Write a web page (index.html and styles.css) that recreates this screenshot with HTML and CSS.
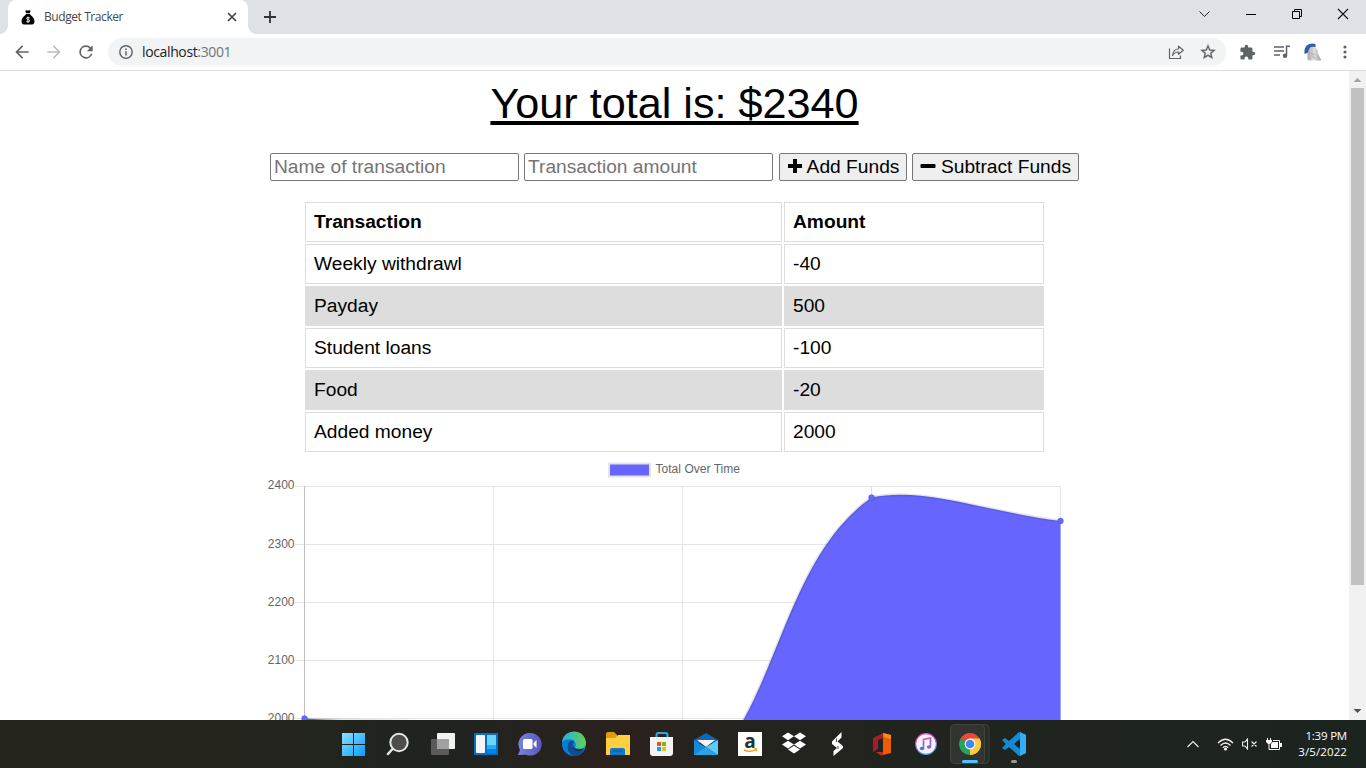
FILE: index.html
```html
<!DOCTYPE html>
<html lang="en">
<head>
<meta charset="utf-8">
<title>Budget Tracker</title>
<link rel="stylesheet" href="styles.css">
</head>
<body>
<div class="screen">
  <header class="tabstrip">
    <div class="tab">
      <svg class="favicon" width="14" height="15" viewBox="0 0 14 15"><path d="M4.300 1.200Q4.300.3 5.200.6L6 .3 7 .7 8.200.3Q9.800.2 9.500 1.200L8.800 3H5.200ZM5.200 3.700h3.600c.3 1.600 4.700 3.400 4.700 7.600 0 2-1 3.300-2.500 3.300H3C1.500 14.600.5 13.300.5 11.300.5 7.100 4.900 5.300 5.200 3.700Z" fill="#000"/><path d="M8.800 8.100C8 7.200 5.400 7.300 5.500 8.600 5.600 9.900 8.700 9.200 8.700 10.800 8.700 12.200 6 12.200 5.200 11.200M7 6.600v6.200" fill="none" stroke="#fff" stroke-width=".9"/></svg>
      <span class="tab-title">Budget Tracker</span>
      <svg class="tab-close" width="10" height="10" viewBox="0 0 10 10"><path d="M1 1l8 8M9 1L1 9" stroke="#3c4043" stroke-width="1.600"/></svg>
      <i class="curve left"></i><i class="curve right"></i>
    </div>
    <svg class="newtab" width="14" height="14" viewBox="0 0 14 14"><path d="M7 1v12M1 7h12" stroke="#303236" stroke-width="1.800"/></svg>
    <div class="winctl">
      <svg viewBox="0 0 46 28"><path d="M17.500 11.500l5 5 5-5" fill="none" stroke="#222" stroke-width="1"/></svg>
      <svg viewBox="0 0 46 28"><path d="M18 14.500h10" stroke="#000"/></svg>
      <svg viewBox="0 0 46 28"><path d="M18.500 11.500h7v7h-7zM20.500 11.500v-2h7v7h-2" fill="none" stroke="#000"/></svg>
      <svg viewBox="0 0 46 28"><path d="M18 9l10 10M28 9L18 19" stroke="#111" stroke-width="1.100"/></svg>
    </div>
  </header>
  <nav class="toolbar">
    <svg class="nav" viewBox="0 0 24 24"><path d="M20 11H7.800l5.600-5.600L12 4l-8 8 8 8 1.400-1.400L7.800 13H20z" fill="#5f6368"/></svg>
    <svg class="nav" viewBox="0 0 24 24"><path d="M12 4l-1.400 1.400 5.600 5.600H4v2h12.200l-5.600 5.600L12 20l8-8z" fill="#bbbdbf"/></svg>
    <svg class="nav" viewBox="0 0 24 24"><path d="M17.650 6.350A8 8 0 1 0 19.730 14h-2.080A6 6 0 1 1 12 6c1.660 0 3.140.69 4.220 1.780L13 11h7V4z" fill="#5f6368"/></svg>
    <div class="omnibox">
      <svg width="14" height="14" viewBox="0 0 14 14"><circle cx="7" cy="7" r="6.200" fill="none" stroke="#5f6368" stroke-width="1.400"/><path d="M7 6.200v4.300M7 3.400v1.500" stroke="#5f6368" stroke-width="1.500"/></svg>
      <span class="url">localhost<span>:3001</span></span>
      <svg class="share" width="16" height="16" viewBox="0 0 16 16" fill="none" stroke="#5f6368" stroke-width="1.200"><path d="M1.500 4.500v10h11v-3"/><path d="M4.500 11.500c.5-4.500 2.500-6.500 6-6.500V2.200L15.300 6.300l-4.800 4V8C8 8 6 9 4.500 11.500z" stroke-linejoin="round"/></svg>
      <svg width="18" height="18" viewBox="0 0 24 24"><path d="M22 9.240l-7.190-.62L12 2 9.190 8.630 2 9.240l5.460 4.730L5.820 21 12 17.270 18.180 21l-1.630-7.030zM12 15.400l-3.760 2.270 1-4.280-3.320-2.880 4.380-.38L12 6.100l1.710 4.040 4.380.38-3.320 2.880 1 4.280z" fill="#5f6368" stroke="#5f6368" stroke-width=".4"/></svg>
    </div>
    <div class="extras">
      <svg width="17" height="17" viewBox="0 0 24 24"><path d="M20.500 11H19V7a2 2 0 0 0-2-2h-4V3.500a2.500 2.500 0 0 0-5 0V5H4a2 2 0 0 0-2 2v3.800h1.500a2.700 2.700 0 0 1 0 5.400H2V20a2 2 0 0 0 2 2h3.800v-1.500a2.700 2.700 0 0 1 5.400 0V22H17a2 2 0 0 0 2-2v-4h1.500a2.500 2.500 0 0 0 0-5z" fill="#5f6368"/></svg>
      <svg width="16" height="14" viewBox="0 0 16 14"><path d="M0 2h10M0 6h10M0 10h6M12.500 1.200H16M12.500.5v10" stroke="#5f6368" stroke-width="1.500" fill="none"/><circle cx="11" cy="10.700" r="2.200" fill="#5f6368"/></svg>
      <svg class="avatar" width="18" height="19" viewBox="0 0 18 19"><defs><linearGradient id="helm"><stop stop-color="#a8a8a8"/><stop offset=".5" stop-color="#dedede"/><stop offset="1" stop-color="#a0a0a0"/></linearGradient></defs><path d="M3.500 8Q5 3.500 11 3.500 13.500 6 14 10.500L17.300 17.300Q12 18.500 8 16.500L6.500 18 3.500 16.500Z" fill="url(#helm)"/><path d="M8.500 13l3 2.500M7 10.500l4 1" stroke="#999" stroke-width=".7"/><path d="M.3 10Q.2 .6 8 .5L11.500 1V4L8 3.800Q4.500 5 4 9.500L1 11Z" fill="#2f5da8"/></svg>
      <svg width="4" height="14" viewBox="0 0 4 14" fill="#5f6368"><circle cx="2" cy="2" r="1.600"/><circle cx="2" cy="7" r="1.600"/><circle cx="2" cy="12" r="1.600"/></svg>
    </div>
  </nav>
  <div class="viewport">
    <main class="page">
      <h1 class="total">Your total is: $2340</h1>
      <form class="entry">
        <input type="text" placeholder="Name of transaction">
        <input type="text" placeholder="Transaction amount">
        <button type="button" class="add"><svg width="16" height="16" viewBox="0 0 16 16"><path d="M8 1v14M1 8h14" stroke="#000" stroke-width="4"/></svg>Add Funds</button>
        <button type="button" class="sub"><svg width="16" height="16" viewBox="0 0 16 16"><rect x=".5" y="6" width="15" height="4" rx="1"/></svg>Subtract Funds</button>
      </form>
      <table class="ledger">
        <thead><tr><th>Transaction</th><th>Amount</th></tr></thead>
        <tbody>
          <tr><td>Weekly withdrawl</td><td>-40</td></tr>
          <tr><td>Payday</td><td>500</td></tr>
          <tr><td>Student loans</td><td>-100</td></tr>
          <tr><td>Food</td><td>-20</td></tr>
          <tr><td>Added money</td><td>2000</td></tr>
        </tbody>
      </table>
      <svg class="chart" width="829" height="268" viewBox="260 452 829 268">
        <rect x="609" y="463.500" width="41" height="13" fill="#66f"/><rect x="609" y="463.500" width="41" height="13" fill="none" stroke="#e5e5e5" stroke-width="2"/>
        <text x="655.500" y="473" textLength="84.500">Total Over Time</text>
        <g stroke="#e5e5e5"><path d="M295 486.500h766M295 544.500h766M295 602.500h766M295 660.500h766M295 718.500h766M493.500 486v240M682.500 486v240M871.500 486v240M1060.500 486v240"/><path d="M304.500 486v240" stroke="#bfbfbf"/></g>
        <path d="M304.500 718.500C380.100 723.100 419.600 716.300 493.500 730S627.600 822.300 682.500 788.500C778.800 729.300 773.900 566.600 871.500 497.500C925.100 486.500 984.900 511.600 1060.500 521V900H304.500Z" fill="#66f"/>
        <path d="M304.500 718.500C380.100 723.100 419.600 716.300 493.500 730S627.600 822.300 682.500 788.500C778.800 729.300 773.900 566.600 871.500 497.500C925.100 486.500 984.900 511.600 1060.500 521" fill="none" stroke="#000" stroke-opacity=".1" stroke-width="3"/>
        <g fill="#66f" stroke="#000" stroke-opacity=".1"><circle cx="304.500" cy="718.500" r="3"/><circle cx="871.500" cy="497.500" r="3"/><circle cx="1060.500" cy="521" r="3"/></g>
        <g text-anchor="end"><text x="294.500" y="489">2400</text><text x="294.500" y="548">2300</text><text x="294.500" y="606">2200</text><text x="294.500" y="664">2100</text><text x="294.500" y="722">2000</text></g>
      </svg>
    </main>
    <aside class="scroll">
      <svg width="17" height="17" viewBox="0 0 17 17"><path d="M4.500 11l4-4 4 4z" fill="#a3a3a3"/></svg>
      <div class="thumb"></div>
      <svg class="down" width="17" height="17" viewBox="0 0 17 17"><path d="M4.500 6l4 4 4-4z" fill="#505050"/></svg>
    </aside>
  </div>
  <footer class="taskbar">
    <div class="apps">
      <svg viewBox="0 0 44 48"><defs><linearGradient id="win" x2="1" y2="1"><stop stop-color="#8be0ff"/><stop offset="1" stop-color="#0a9bff"/></linearGradient></defs><path d="M11 13h11v11H11zM23 13h11v11H23zM11 25h11v11H11zM23 25h11v11H23z" fill="url(#win)"/></svg>
      <svg viewBox="0 0 44 48"><circle cx="23" cy="22.500" r="8.700" fill="#4d4d4a" stroke="#e6e6e6" stroke-width="2"/><path d="M16.500 29l-4.500 5" stroke="#e6e6e6" stroke-width="2.500" stroke-linecap="round"/></svg>
      <svg viewBox="0 0 44 48"><rect x="17" y="13" width="18" height="16" rx="1" fill="#f2f2f2"/><rect x="11" y="19" width="18" height="16" rx="1" fill="#5b5b5b"/><path d="M17 19h12v10H17z" fill="#a1a1a1"/></svg>
      <svg viewBox="0 0 44 48"><rect x="10" y="13" width="24" height="22" rx="1" fill="#0870c4"/><rect x="12" y="15" width="9" height="18" rx="1" fill="#f4f4f4"/><path d="M23 15h9v10h-9z" fill="#6bd5ff"/><path d="M23 25h9v4h-9z" fill="#24adf7"/><path d="M23 29h9v4h-9z" fill="#0a83e6"/></svg>
      <svg viewBox="0 0 44 48"><defs><linearGradient id="chat"><stop stop-color="#7b83dd"/><stop offset="1" stop-color="#5558bd"/></linearGradient></defs><path d="M22 13a11.300 11.300 0 1 1-4 21.700L10 35l2-5A11.300 11.300 0 0 1 22 13z" fill="url(#chat)"/><rect x="15" y="19" width="9.500" height="10" rx="1.500" fill="#fff"/><path d="M25.500 23l3-3v8l-3-3z" fill="#fff"/></svg>
      <svg viewBox="0 0 44 48"><defs><linearGradient id="edge-top"><stop stop-color="#28aee5"/><stop offset="1" stop-color="#61d34f"/></linearGradient></defs><circle cx="22" cy="24" r="12" fill="#087dd4"/><path d="M10 22C12 8 33 8 34 23c0 5-5 7-10 5-2-1 1-3-1-6-3-4-10-3-13 0z" fill="url(#edge-top)"/><path d="M16 25c0-3 3-5 6-4-4 5 0 12 10 9-3 4-7 6-10 6-5-2-7-6-6-11z" fill="#104a91"/><path d="M22 22c-2 2-1 6 2 7 3 1 6 0 8-1-1 2-3 3-5 3-5 0-8-5-5-9z" fill="#22241f"/></svg>
      <svg viewBox="0 0 44 48"><path d="M10 14q0-2 2-2h6l3 3v4H10z" fill="#df9c08"/><path d="M10 18h9l3-3h12v20H10z" fill="#ffcf40"/><path d="M14 35v-5q0-2 2-2h11q2 0 2 2v5z" fill="#1178cb"/><path d="M17 31h9" stroke="#0d559a"/></svg>
      <svg viewBox="0 0 44 48"><path d="M16.500 18v-3q0-2 2-2h7q2 0 2 2v3" fill="none" stroke="#27a8ec" stroke-width="2"/><path d="M10 17h23v16q0 3-3 3H13q-3 0-3-3z" fill="#f4f4f4"/><path d="M17 22h4v4h-4z" fill="#f25022"/><path d="M22 22h4v4h-4z" fill="#7fba00"/><path d="M17 27h4v4h-4z" fill="#00a4ef"/><path d="M22 27h4v4h-4z" fill="#ffb900"/></svg>
      <svg viewBox="0 0 44 48"><path d="M10 20l12-7 12 7v3H10z" fill="#1264b6"/><path d="M13 20h18l-9 7z" fill="#f5f5f5"/><path d="M10 20l24 15H10z" fill="#168bd6"/><path d="M34 20L22 27l12 8z" fill="#5cccf6"/><path d="M10 35h24L22 27z" fill="#28a3ea"/></svg>
      <div class="amazon"><b>a</b><svg viewBox="0 0 24 24"><path d="M6 18q6 3 12-.5" fill="none" stroke="#ff9900" stroke-width="1.400"/><path d="M16 16.800l3-.2-1 2.500" fill="none" stroke="#ff9900"/></svg></div>
      <svg viewBox="0 0 44 48"><path d="M16 12.500l6 3.800-6 3.900-6-3.900zM28 12.500l6 3.800-6 3.900-6-3.900zM16 20.700l6 3.800-6 3.900-6-3.900zM28 20.700l6 3.800-6 3.900-6-3.900zM22 25.700l6 3.800-6 3.900-6-3.900z" fill="#fff"/></svg>
      <svg viewBox="0 0 44 48"><path d="M25.500 12v5.500l-4 4L27 26v2l-9.500 8v-5l3.500-3-5-4v-2.500z" fill="#fff"/><path d="M20.500 18.500v3.500M22 26v3" fill="none" stroke="#22241f" stroke-width=".8"/></svg>
      <svg viewBox="0 0 44 48"><path d="M13 18l10-5v5l-5 2v9l-5 3z" fill="#a91d2a"/><path d="M16 32h8v3l-3 .5z" fill="#c62b20"/><path d="M23 13l8 2v18l-8 2z" fill="#ec5b05"/><path d="M23 13l8 2v4l-7-2z" fill="#ff8b1b"/></svg>
      <svg viewBox="0 0 44 48"><defs><linearGradient id="music" x2=".2" y2="1"><stop stop-color="#f45a92"/><stop offset=".5" stop-color="#a756d0"/><stop offset="1" stop-color="#39a4eb"/></linearGradient></defs><circle cx="22" cy="24" r="10.400" fill="#f6f3fc" stroke="url(#music)" stroke-width="1.100"/><path d="M19.500 28.500v-9l7-1.500v8.500" fill="none" stroke="url(#music)" stroke-width="1.700"/><ellipse cx="18" cy="28.500" rx="2.200" ry="1.700" fill="#5e68de"/><ellipse cx="25" cy="27" rx="2.200" ry="1.700" fill="#9b56ca"/></svg>
      <svg viewBox="0 0 44 48"><rect x="5" y="4.500" width="36" height="39" rx="4" fill="#292c28" stroke="#3b3d39"/><rect x="2.500" y="4.500" width="34" height="39" rx="4" fill="#313430" stroke="#41443f"/><path d="M22 24L12.500 18.500A11 11 0 0 1 31.500 18.500Z" fill="#e64b3c"/><path d="M22 24l9.500-5.500A11 11 0 0 1 22 35Z" fill="#ffcc40"/><path d="M22 24v11A11 11 0 0 1 12.500 18.500Z" fill="#27a35a"/><path d="M22 18.500h9.500A11 11 0 0 1 22 35l5-8z" fill="#ffcc40"/><circle cx="22" cy="24" r="5.400" fill="#fff"/><circle cx="22" cy="24" r="4.300" fill="#4288ee"/><rect x="14" y="40" width="16" height="3" rx="1.500" fill="#4cc2ff"/></svg>
      <svg viewBox="0 0 44 48"><path d="M27 12l7 3v18l-7 3-10-9-4 3-3-2 4-4-4-4 3-2 4 3zM28 19l-6 5 6 5z" fill="#168bd4" fill-rule="evenodd"/><path d="M28 12l6 3v18l-6 3z" fill="#31aef4"/><rect x="19" y="40" width="6" height="3" rx="1.500" fill="#999"/></svg>
    </div>
    <div class="tray">
      <svg width="12" height="8" viewBox="0 0 12 8"><path d="M.5 7L6 1.500 11.500 7" fill="none" stroke="#eee" stroke-width="1.200"/></svg>
      <svg class="wifi" width="17" height="13" viewBox="0 0 17 13"><path d="M1 5Q8.500-2.500 16 5M3.500 7.500Q8.500 2.500 13.500 7.500M5.800 9.800Q8.500 7 11.200 9.800" fill="none" stroke="#eee" stroke-width="1.300"/><circle cx="8.500" cy="11" r="1.500" fill="#fff"/></svg>
      <svg width="16" height="12" viewBox="0 0 16 12"><path d="M.5 4H3l2.500-3v10L3 8H.5zM9.500 3.500l5 5M14.500 3.500l-5 5" fill="none" stroke="#eee" stroke-width="1.100"/></svg>
      <svg width="16" height="13" viewBox="0 0 16 13"><path d="M1.500 0v2M4.500 0v2M3 6v5.500h1" fill="none" stroke="#fff"/><path d="M0 2h6v2L4 6H2L0 4z" fill="#fff"/><path d="M7 2.500h6.500v9H3.500" fill="none" stroke="#fff"/><path d="M6.500 4H12v6H5V6zM14 5h2v4h-2z" fill="#fff"/></svg>
      <div class="clock"><span>1:39 PM</span><span class="date">3/5/2022</span></div>
    </div>
  </footer>
</div>
</body>
</html>
```
FILE: styles.css
```css
* { box-sizing: border-box; }
body { margin: 0; overflow: hidden; font-family: "Liberation Sans", Arial, sans-serif; }
svg { display: block; flex-shrink: 0; }
.screen { width: 1366px; height: 768px; display: grid; grid-template-rows: 34px 37px 649px 48px; background: #fff; }
.tabstrip { display: flex; background: #dee1e6; padding-left: 8px; }
.tab { position: relative; width: 240px; height: 34px; background: #fff; border-radius: 8px 8px 0 0; display: flex; align-items: center; padding: 0 11px 0 13px; }
.favicon { margin-right: 9px; }
.tab-title { font: 12px "Open Sans", sans-serif; letter-spacing: -.42px; color: #45484c; flex: 1; padding-bottom: 2px; white-space: nowrap; }
.curve { position: absolute; bottom: 0; width: 8px; height: 8px; }
.left { left: -8px; background: radial-gradient(circle at 0 0, #dee1e6 7.500px, #fff 8px); }
.right { right: -8px; background: radial-gradient(circle at 100% 0, #dee1e6 7.500px, #fff 8px); }
.newtab { margin: 10px 0 0 15px; }
.winctl { margin-left: auto; display: flex; }
.winctl svg { width: 46px; height: 28px; }
.toolbar { display: flex; align-items: center; height: 37px; border-bottom: 1px solid #dadce0; padding-left: 12px; }
.nav { width: 20px; height: 20px; margin-right: 12px; }
.omnibox { display: flex; align-items: center; width: 1118px; height: 28px; border-radius: 14px; background: #f1f3f4; padding: 0 9px 0 11px; }
.url { margin-left: 9px; flex: 1; padding-bottom: 2px; font: 14px "Open Sans", sans-serif; letter-spacing: -.37px; color: #202124; }
.url span { color: #70757a; }
.share { margin-right: 15px; }
.extras { flex: 1; display: flex; align-items: center; justify-content: space-between; padding: 0 19px 0 13px; }
.avatar { margin: 0 3px 0 -4px; }
.viewport { display: flex; overflow: hidden; }
.page { width: 1349px; display: flex; flex-direction: column; align-items: center; }
.total { margin: 7px 0 0; height: 50px; font-size: 43.200px; font-weight: 400; line-height: 50px; text-decoration: underline; text-decoration-thickness: 4px; text-underline-offset: 3px; white-space: nowrap; }
.entry { display: flex; gap: 5px; margin: 25px 0 0; height: 28px; }
.entry input, .entry button { height: 28px; font: 19.200px "Liberation Sans", Arial, sans-serif; border-radius: 2px; border: 1px solid #767676; }
.entry input { width: 249px; padding: 0 3px; background: #fff; }
.entry input::placeholder { color: #757575; }
.entry button { display: flex; align-items: center; justify-content: center; gap: 4px; padding: 0; background: #efefef; color: #000; white-space: nowrap; }
.entry button svg { margin-bottom: 2px; }
.add { width: 128px; }
.entry .add { margin-left: 1px; }
.entry .sub { width: 167px; gap: 5px; }
.ledger { width: 743px; margin-top: 19px; border-collapse: separate; border-spacing: 2px; table-layout: fixed; font-size: 19.200px; }
.ledger th, .ledger td { height: 40px; padding: 0 8px; border: 1px solid #ddd; text-align: left; }
.ledger th:first-child { width: 477px; }
.ledger tbody tr:nth-child(even) td { background: #ddd; }
.chart { margin-top: -2px; font-size: 12px; fill: #666; }
.scroll { width: 17px; height: 649px; background: #f1f1f1; display: flex; flex-direction: column; align-items: center; }
.thumb { width: 13px; height: 497px; background: #c1c1c1; }
.down { margin-top: auto; }
.taskbar { position: relative; display: flex; justify-content: space-between; padding-left: 331px; background: linear-gradient(90deg, #28241d, #22241e 25%, #1f2421 32%, #2b211d 45%, #23241d 56%, #20241f 75%, #1c2420); }
.apps { display: flex; }
.apps > svg { width: 44px; height: 48px; }
.apps > svg:first-child { margin-right: 1px; }
.amazon { position: relative; width: 24px; height: 24px; margin: 12px 10px; background: #fff; text-align: center; }
.amazon b { display: block; font: bold 19px/18px "Open Sans", sans-serif; color: #222f3e; }
.amazon svg { position: absolute; inset: 0; }
.tray { display: flex; align-items: center; gap: 8px; width: 179px; color: #fff; }
.wifi { margin-left: 10px; }
.clock { margin-left: auto; padding-right: 19px; font: 11.500px/16px "Open Sans", sans-serif; letter-spacing: -.2px; text-align: right; }
.clock span { display: block; }
.clock .date { letter-spacing: .1px; }
```
